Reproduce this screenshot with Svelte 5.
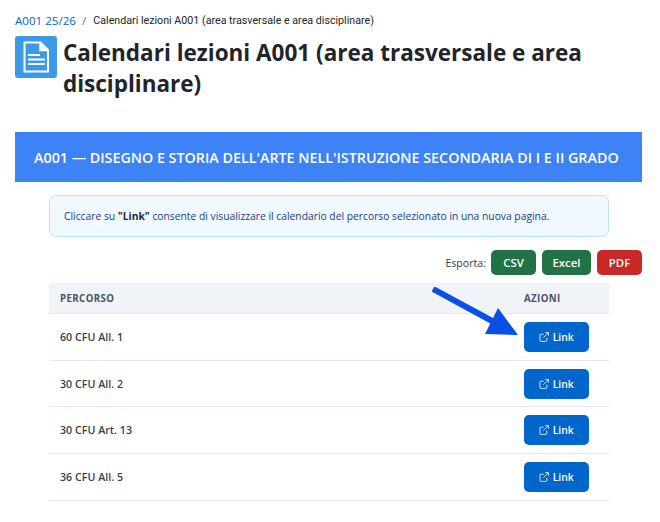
<script>
  const rows = ['60 CFU All. 1', '30 CFU All. 2', '30 CFU Art. 13', '36 CFU All. 5'];
</script>

<div class="page">
  <nav class="crumbs">
    <a href="#top">A001 25/26</a>
    <span class="sep">/</span>
    <span class="current">Calendari lezioni A001 (area trasversale e area disciplinare)</span>
  </nav>

  <header class="head">
    <div class="logo">
      <svg width="42" height="42" viewBox="0 0 42 42" aria-hidden="true">
        <rect width="42" height="42" rx="3" fill="#3b9ae6" />
        <path d="M9.5 6.5h16l7.5 7.5v21.5h-23.5z" fill="none" stroke="#fff" stroke-width="2" />
        <path d="M25 6.5v8h8" fill="#fff" stroke="#fff" stroke-width="1.5" />
        <path d="M13 19h12M13 23.5h17M13 28h17" stroke="#fff" stroke-width="2" />
      </svg>
    </div>
    <h1>Calendari lezioni A001 (area trasversale e area disciplinare)</h1>
  </header>

  <div class="banner">A001 — DISEGNO E STORIA DELL'ARTE NELL'ISTRUZIONE SECONDARIA DI I E II GRADO</div>

  <section class="body">
    <div class="notice">
      Cliccare su <b>"Link"</b> consente di visualizzare il calendario del percorso selezionato in una nuova pagina.
    </div>

    <div class="export">
      <span>Esporta:</span>
      <button class="green" type="button">CSV</button>
      <button class="green" type="button">Excel</button>
      <button class="red" type="button">PDF</button>
    </div>

    <div class="table">
      <div class="row th">
        <span>PERCORSO</span>
        <span class="action">AZIONI</span>
      </div>
      {#each rows as row}
        <div class="row">
          <span class="name">{row}</span>
          <span class="action">
            <button class="link" type="button">
              <svg width="10" height="10" viewBox="0 0 16 16" fill="none" stroke="currentColor" stroke-width="1.3" aria-hidden="true">
                <path d="M12.5 9v4.5a1.5 1.5 0 0 1-1.5 1.5H3a1.5 1.5 0 0 1-1.5-1.5V5A1.5 1.5 0 0 1 3 3.5h4.5" />
                <path d="M10 1h5v5M15 1 7 9" />
              </svg>
              Link
            </button>
          </span>
        </div>
      {/each}
    </div>

    <svg class="arrow" width="100" height="58" viewBox="0 0 100 58" aria-hidden="true">
      <path d="M1 2 62 35" stroke="#0a50e6" stroke-width="6" />
      <path d="M66 21 86 48 53 47z" fill="#0a50e6" />
    </svg>
  </section>
</div>

<style>
  :global(body) {
    margin: 0;
    background: #fff;
    font-family: "Open Sans", "Noto Sans", sans-serif;
  }
  .page { padding: 13px 18px 0 15px; }
  .crumbs {
    display: flex;
    gap: 6px;
    font-size: 11.6px;
    line-height: 16px;
    color: #212529;
  }
  .crumbs a { color: #0066cc; text-decoration: none; }
  .current { font-family: Roboto, sans-serif; font-size: 10.7px; margin-left: 1px; }
  .sep { color: #6c757d; }
  .head {
    display: flex;
    gap: 6px;
    margin-top: 7px;
  }
  .logo { flex: none; height: 42px; }
  .logo svg { display: block; }
  h1 {
    margin: 1px 0 0;
    font-size: 22.5px;
    line-height: 31px;
    font-weight: 700;
    color: #212529;
  }
  .banner {
    margin-top: 33px;
    height: 50px;
    display: flex;
    align-items: center;
    padding-left: 19px;
    background: #3d82f6;
    color: #fff;
    font-size: 14.3px;
    font-weight: 600;
    white-space: nowrap;
  }
  .body {
    position: relative;
    padding: 13px 33px 0 34px;
  }
  .notice {
    height: 42px;
    box-sizing: border-box;
    display: flex;
    align-items: center;
    white-space: pre-wrap;
    padding-left: 14px;
    border: 1px solid #bae6fd;
    border-radius: 7px;
    background: #f0f9ff;
    color: #1e3a8a;
    font-size: 10.3px;
  }
  .notice b { color: #1e293b; }
  .export {
    display: flex;
    align-items: center;
    justify-content: flex-end;
    gap: 6px;
    margin: 13px -33px 0 0;
    font-size: 10.6px;
    color: #343a40;
  }
  .export span { margin-right: -1px; }
  .export button {
    width: 45px;
    height: 25px;
    padding: 0;
    border: 0;
    border-radius: 5px;
    color: #fff;
    font: 600 11.4px "Open Sans", sans-serif;
  }
  .export button:nth-of-type(2) { width: 49px; }
  .green { background: #217346; }
  .red { background: #c82828; }
  .table { margin-top: 8px; }
  .row {
    display: flex;
    align-items: center;
    height: 46.7px;
    box-sizing: border-box;
    padding: 0 20px 0 11px;
    border-bottom: 1px solid #e4e8f0;
    font-size: 10.7px;
    font-weight: 600;
    color: #3a3f45;
  }
  .th {
    height: 31px;
    background: #f0f3f8;
    font-size: 9.7px;
    font-weight: 700;
    letter-spacing: 0.4px;
    color: #475569;
  }
  .name { flex: 1; }
  .th span:first-child { flex: 1; }
  .action { width: 65px; }
  .link {
    display: flex;
    align-items: center;
    justify-content: center;
    gap: 3.5px;
    width: 65px;
    height: 30px;
    border: 0;
    border-radius: 5px;
    background: #0066cc;
    color: #fff;
    font: 600 10.4px "Open Sans", sans-serif;
  }
  .arrow {
    position: absolute;
    left: 417px;
    top: 105px;
  }
</style>
